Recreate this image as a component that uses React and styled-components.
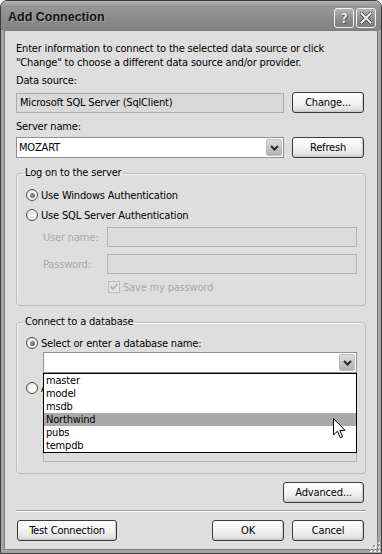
import React from "react";
import styled, { createGlobalStyle } from "styled-components";

const FONT = `"DejaVu Sans Condensed", "DejaVu Sans", sans-serif`;

const Global = createGlobalStyle`
  html, body { margin: 0; padding: 0; background: #ffffff; }
  body { font-family: ${FONT}; font-size: 11px; letter-spacing: -0.18px; color: #000; }
  * { box-sizing: border-box; }
`;

const Window = styled.div`
  position: relative;
  width: 382px;
  height: 554px;
  display: flex;
  flex-direction: column;
  background: #a6a6a6;
  border: 1px solid #3e3e3e;
  border-radius: 7px 7px 0 0;
  padding: 0 3px 3px;
  overflow: hidden;
`;

const TitleBar = styled.div`
  height: 29px;
  margin: 0 -3px;
  padding: 0 5px 0 7px;
  display: flex;
  align-items: center;
  background: linear-gradient(#b5b5b5 0%, #979797 18%, #8b8b8b 60%, #828282 100%);
`;

const Title = styled.div`
  flex: 1;
  font-family: "Liberation Sans", Arial, sans-serif;
  font-weight: bold;
  font-size: 12.5px;
  letter-spacing: 0;
  color: #141414;
  text-shadow: 1px 1px 0 #a4a4a4;
  padding-top: 2px;
`;

const TitleButtons = styled.div`
  display: flex;
  gap: 2px;
  padding-top: 4px;
`;

const TitleButton = styled.div`
  width: 20px;
  height: 20px;
  border: 1px solid #f2f2f2;
  border-radius: 3px;
  background: linear-gradient(#b4b4b4, #8e8e8e 55%, #7c7c7c);
  display: flex;
  align-items: center;
  justify-content: center;
  font-family: ${FONT};
  font-weight: bold;
  font-size: 14px;
  color: #ececec;
  text-shadow: 0 0 1px #333, 1px 1px 0 #555;
`;

const Body = styled.div`
  flex: 1;
  display: flex;
  flex-direction: column;
  background: #dedede;
  border: 1px solid #7c7c7c;
  padding: 11px 11px 0 11px;
`;

const Intro = styled.p`
  margin: 0;
  line-height: 14px;
`;

const Label = styled.div`
  margin-top: ${(p) => p.$mt || 0}px;
  line-height: 14px;
  height: 14px;
  color: ${(p) => (p.$disabled ? "#a9a9a9" : "#000")};
`;

const Row = styled.div`
  display: flex;
  align-items: center;
  gap: 8px;
  height: 21px;
  margin-top: ${(p) => p.$mt || 0}px;
  justify-content: ${(p) => p.$justify || "flex-start"};
`;

const ReadBox = styled.div`
  flex: 1;
  height: 20px;
  background: #d9d9d9;
  border: 1px solid #ababab;
  padding: 0 3px;
  line-height: 18px;
  white-space: nowrap;
`;

const Combo = styled.div`
  position: relative;
  flex: 1;
  height: 21px;
  background: #fff;
  border: 1px solid #8f8f8f;
  display: flex;
  align-items: center;
  padding-left: 2px;
`;

const ComboText = styled.span`
  flex: 1;
  line-height: 19px;
`;

const ArrowButton = styled.div`
  width: 16px;
  height: 17px;
  margin-right: 1px;
  border: 1px solid #bdbdbd;
  border-radius: 2px;
  background: linear-gradient(#dcdcdc, #c2c2c2 60%, #b2b2b2);
  display: flex;
  align-items: center;
  justify-content: center;
`;

const Button = styled.button`
  height: 21px;
  width: ${(p) => p.$w || 72}px;
  margin-right: ${(p) => (p.$mr === undefined ? 2 : p.$mr)}px;
  margin-left: ${(p) => p.$ml || 0}px;
  flex: none;
  padding: 0;
  border: 1px solid #3a3a3a;
  border-radius: 3px;
  background: linear-gradient(#ffffff 0%, #f4f4f4 45%, #e6e6e6 80%, #cfcfcf 100%);
  box-shadow: inset -1px -1px 0 #cacaca;
  font-family: ${FONT};
  font-size: 11px;
  letter-spacing: -0.18px;
  color: #000;
`;

const Group = styled.fieldset`
  margin: ${(p) => p.$mt || 0}px 0 0 0;
  padding: 5px 8px 11px 9px;
  min-width: 0;
  border: 1px solid #bcbcbc;
  border-radius: 4px;
  box-shadow: inset 1px 1px 0 #f4f4f4;
`;

const Legend = styled.legend`
  margin-left: -3px;
  padding: 0 2px;
  line-height: 14px;
  height: 14px;
`;

const RadioRow = styled.div`
  display: flex;
  align-items: center;
  height: ${(p) => p.$h || 20}px;
  margin-top: ${(p) => p.$mt || 0}px;
  gap: 3px;
  white-space: nowrap;
`;

const RadioCircle = styled.span`
  position: relative;
  width: 12px;
  height: 12px;
  flex: none;
  border: 1px solid #4e4e4e;
  border-radius: 50%;
  background: radial-gradient(circle at 65% 65%, #ffffff 0%, #f2f2f2 50%, #d8d8d8 100%);
  &::after {
    content: "";
    display: ${(p) => (p.$checked ? "block" : "none")};
    position: absolute;
    left: 2.5px;
    top: 2.5px;
    width: 5px;
    height: 5px;
    border-radius: 50%;
    background: radial-gradient(circle at 40% 40%, #9a9a9a, #505050);
  }
`;

const FieldRow = styled.div`
  display: flex;
  align-items: center;
  height: 20px;
  margin-top: ${(p) => p.$mt || 0}px;
  margin-left: 17px;
`;

const FieldLabel = styled.span`
  width: 64px;
  flex: none;
  color: #a9a9a9;
`;

const DisabledInput = styled.div`
  flex: 1;
  height: 20px;
  background: #dcdcdc;
  border: 1px solid #b3b3b3;
`;

const CheckRow = styled.div`
  display: flex;
  align-items: center;
  height: 14px;
  margin-top: ${(p) => p.$mt || 0}px;
  margin-left: 82px;
  gap: 3px;
  color: #a9a9a9;
`;

const CheckBox = styled.span`
  width: 12px;
  height: 12px;
  flex: none;
  border: 1px solid #bdbdbd;
  background: #e4e4e4;
  display: flex;
  align-items: center;
  justify-content: center;
`;

const ComboWrap = styled.div`
  position: relative;
  display: flex;
  height: 21px;
  margin-left: 17px;
`;

const DropList = styled.ul`
  position: absolute;
  left: 0;
  right: 0;
  top: 100%;
  margin: 0;
  padding: 0;
  list-style: none;
  background: #fff;
  border: 1px solid #000;
  z-index: 2;
`;

const DropItem = styled.li`
  height: 13px;
  line-height: 13px;
  padding-left: 2px;
  background: ${(p) => (p.$active ? "#a9a9a9" : "transparent")};
`;

const Separator = styled.div`
  margin-top: 7px;
  height: 2px;
  border-top: 1px solid #a2a2a2;
  border-bottom: 1px solid #fafafa;
`;

const BottomRow = styled.div`
  display: flex;
  align-items: center;
  height: 21px;
  margin-top: 8px;
`;

const Spacer = styled.div`
  flex: 1;
`;

const Cursor = styled.svg`
  position: absolute;
  left: 332px;
  top: 417px;
  z-index: 5;
`;

const Grip = styled.svg`
  position: absolute;
  right: 1px;
  bottom: 1px;
`;

const Chevron = () => (
  <svg width="9" height="6" viewBox="0 0 9 6">
    <path d="M1 1 L4.5 4.5 L8 1" fill="none" stroke="#2a2a2a" strokeWidth="2" />
  </svg>
);

const dbs = ["master", "model", "msdb", "Northwind", "pubs", "tempdb"];

export default function App() {
  return (
    <>
      <Global />
      <Window>
        <TitleBar>
          <Title>Add Connection</Title>
          <TitleButtons>
            <TitleButton>?</TitleButton>
            <TitleButton>
              <svg width="12" height="12" viewBox="0 0 12 12">
                <path d="M1.5 1.5 L10.5 10.5 M10.5 1.5 L1.5 10.5" stroke="#3a3a3a" strokeWidth="3.4" strokeLinecap="square" />
                <path d="M1.5 1.5 L10.5 10.5 M10.5 1.5 L1.5 10.5" stroke="#f4f4f4" strokeWidth="2" strokeLinecap="square" />
              </svg>
            </TitleButton>
          </TitleButtons>
        </TitleBar>
        <Body>
          <Intro>
            Enter information to connect to the selected data source or click
            <br />
            "Change" to choose a different data source and/or provider.
          </Intro>
          <Label $mt={4}>Data source:</Label>
          <Row $mt={4}>
            <ReadBox>Microsoft SQL Server (SqlClient)</ReadBox>
            <Button>Change...</Button>
          </Row>
          <Label $mt={7}>Server name:</Label>
          <Row $mt={3}>
            <Combo>
              <ComboText>MOZART</ComboText>
              <ArrowButton>
                <Chevron />
              </ArrowButton>
            </Combo>
            <Button>Refresh</Button>
          </Row>
          <Group $mt={8}>
            <Legend>Log on to the server</Legend>
            <RadioRow>
              <RadioCircle $checked />
              <span>Use Windows Authentication</span>
            </RadioRow>
            <RadioRow>
              <RadioCircle />
              <span>Use SQL Server Authentication</span>
            </RadioRow>
            <FieldRow $mt={2}>
              <FieldLabel>User name:</FieldLabel>
              <DisabledInput />
            </FieldRow>
            <FieldRow $mt={7}>
              <FieldLabel>Password:</FieldLabel>
              <DisabledInput />
            </FieldRow>
            <CheckRow $mt={6}>
              <CheckBox>
                <svg width="8" height="8" viewBox="0 0 8 8">
                  <path d="M0.5 3.5 L3 6 L7.5 1" fill="none" stroke="#b2b2b2" strokeWidth="1.8" />
                </svg>
              </CheckBox>
              <span>Save my password</span>
            </CheckRow>
          </Group>
          <Group $mt={9}>
            <Legend>Connect to a database</Legend>
            <RadioRow $h={18}>
              <RadioCircle $checked />
              <span>Select or enter a database name:</span>
            </RadioRow>
            <ComboWrap>
              <Combo>
                <ComboText />
                <ArrowButton>
                  <Chevron />
                </ArrowButton>
              </Combo>
              <DropList>
                {dbs.map((d) => (
                  <DropItem key={d} $active={d === "Northwind"}>
                    {d}
                  </DropItem>
                ))}
              </DropList>
            </ComboWrap>
            <RadioRow $mt={5}>
              <RadioCircle />
              <span>A</span>
            </RadioRow>
            <FieldRow $mt={3}>
              <DisabledInput />
            </FieldRow>
            <FieldRow $mt={21}>
              <DisabledInput />
            </FieldRow>
          </Group>
          <Row $mt={8} $justify="flex-end">
            <Button $w={81}>Advanced...</Button>
          </Row>
          <Separator />
          <BottomRow>
            <Button $w={100} $ml={1} $mr={0}>Test Connection</Button>
            <Spacer />
            <Button $w={72} $mr={8}>OK</Button>
            <Button $w={72}>Cancel</Button>
          </BottomRow>
        </Body>
        <Cursor width="13" height="22" viewBox="0 0 13 22">
          <path d="M0.5 0.5 L0.5 17 L4.5 13.2 L7.3 19.8 L9.6 18.8 L6.9 12.4 L12 12.4 Z" fill="#fff" stroke="#000" strokeWidth="1" strokeLinejoin="miter" />
        </Cursor>
        <Grip width="11" height="11" viewBox="0 0 11 11">
          {[[9, 1], [9, 5], [5, 5], [9, 9], [5, 9], [1, 9]].map(([x, y], i) => (
            <g key={i}>
              <rect x={x} y={y} width="2" height="2" fill="#ffffff" />
              <rect x={x - 1} y={y - 1} width="2" height="2" fill="#9a9a9a" />
            </g>
          ))}
        </Grip>
      </Window>
    </>
  );
}
